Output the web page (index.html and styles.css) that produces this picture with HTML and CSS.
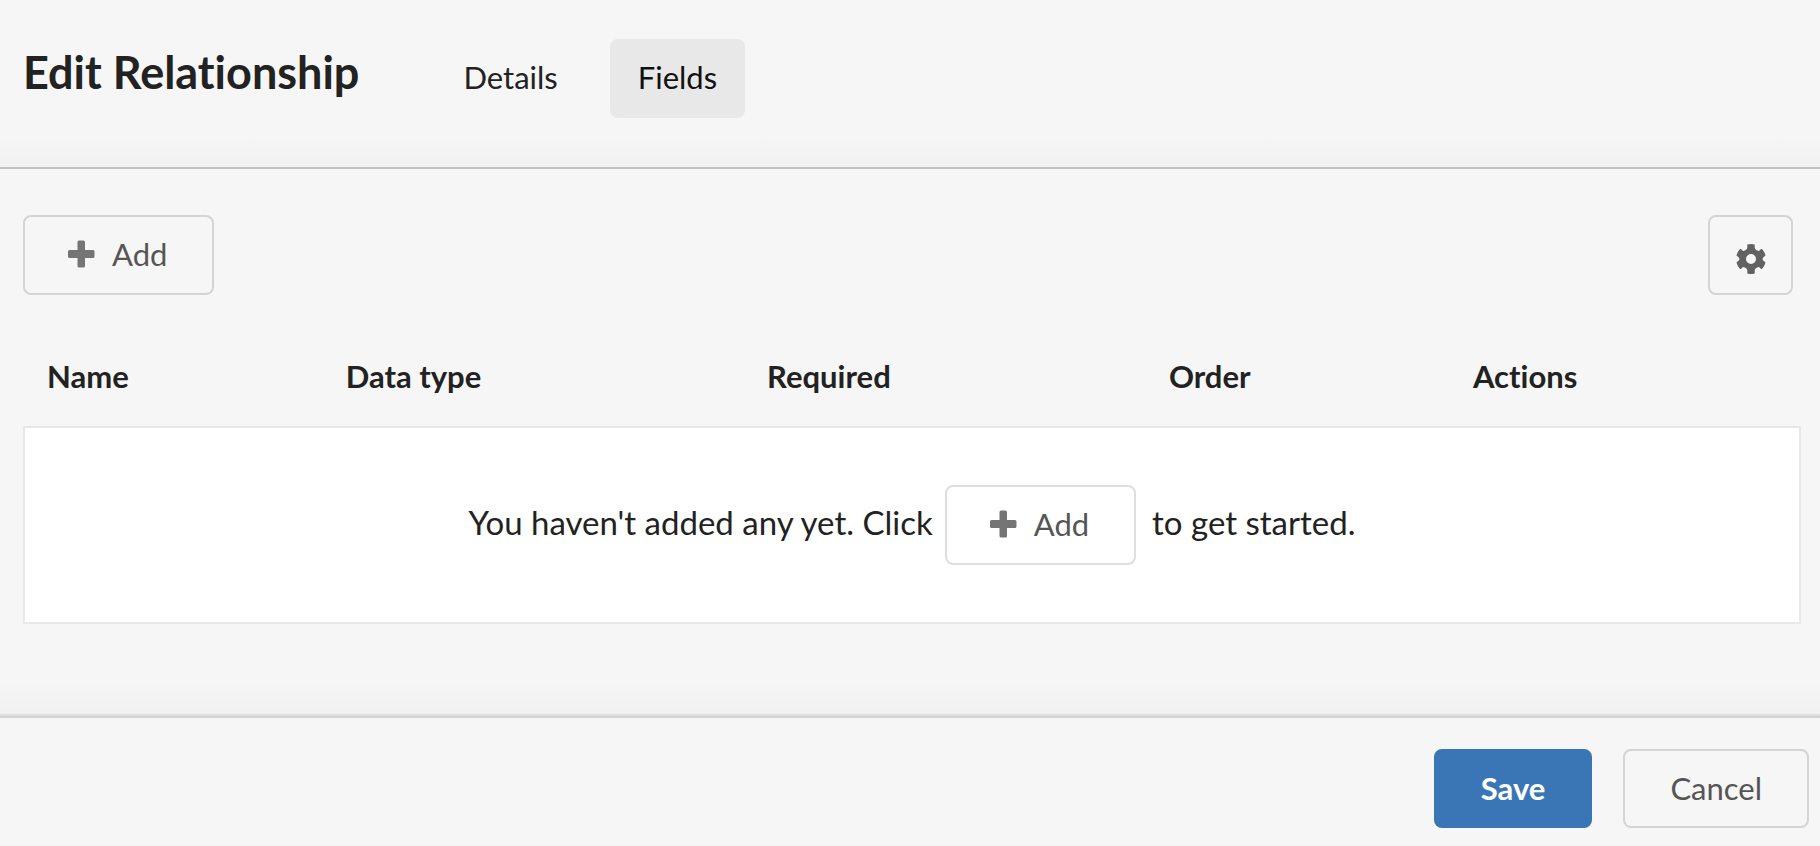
FILE: index.html
```html
<!DOCTYPE html>
<html lang="en">
<head>
<meta charset="utf-8">
<title>Edit Relationship</title>
<link rel="stylesheet" href="styles.css">
</head>
<body>
<div class="dialog">
  <header class="dialog-header">
    <h1 class="title">Edit Relationship</h1>
    <nav class="tabs">
      <a class="tab" href="#details">Details</a>
      <a class="tab active" href="#fields" aria-current="page">Fields</a>
    </nav>
  </header>
  <main class="content">
    <div class="toolbar">
      <button class="button" type="button">
        <svg class="icon-plus" viewBox="0 0 28 28" aria-hidden="true"><path d="M12 .5h4.500q1.500 0 1.500 1.500v8h8q1.500 0 1.500 1.500v5q0 1.500-1.500 1.500h-8v8q0 1.500-1.500 1.500h-4.500q-1.500 0-1.500-1.500v-8h-8q-1.500 0-1.500-1.500v-5q0-1.500 1.500-1.500h8v-8q0-1.500 1.500-1.500z"/></svg>
        Add
      </button>
      <button class="button square" type="button" aria-label="Settings">
        <svg class="icon-gear" viewBox="0 0 30 30" aria-hidden="true"><path fill-rule="evenodd" d="M11.300 .600Q15-.4 18.700.6V3.800Q18.900 5.300 20.300 6L21.800 6.800Q23 7.200 23.800 6.200L25 4.900H26Q28.400 7.500 29.400 11V11.800L28 12.800Q26.600 13.500 26.600 15Q26.600 16.500 28 17.200L29.400 18.200V19Q28.400 22.500 26 25.100H25L23.800 23.800Q23 22.800 21.800 23.200L20.300 24Q18.900 24.700 18.700 26.200V29.400Q15 30.400 11.300 29.400V26.200Q11.100 24.700 9.700 24L8.200 23.200Q7 22.800 6.200 23.800L5 25.100H4Q1.600 22.500.6 19V18.200L2 17.200Q3.400 16.500 3.400 15Q3.400 13.500 2 12.800L.6 11.800V11Q1.600 7.500 4 4.900H5L6.200 6.200Q7 7.200 8.200 6.800L9.700 6Q11.100 5.300 11.300 3.800ZM15 10a5 5 0 1 0 0 10a5 5 0 1 0 0-10z"/></svg>
      </button>
    </div>
    <table class="fields">
      <colgroup><col class="col-name"><col class="col-type"><col class="col-required"><col class="col-order"><col class="col-actions"></colgroup>
      <thead>
        <tr><th scope="col">Name</th><th scope="col">Data type</th><th scope="col">Required</th><th scope="col">Order</th><th scope="col">Actions</th></tr>
      </thead>
      <tbody>
        <tr>
          <td colspan="5">
            <div class="empty">
              <span>You haven't added any yet. Click</span>
              <button class="button" type="button">
                <svg class="icon-plus" viewBox="0 0 28 28" aria-hidden="true"><path d="M12 .5h4.500q1.500 0 1.500 1.500v8h8q1.500 0 1.500 1.500v5q0 1.500-1.500 1.500h-8v8q0 1.500-1.500 1.500h-4.500q-1.500 0-1.500-1.500v-8h-8q-1.500 0-1.500-1.500v-5q0-1.500 1.500-1.500h8v-8q0-1.500 1.500-1.500z"/></svg>
                Add
              </button>
              <span>to get started.</span>
            </div>
          </td>
        </tr>
      </tbody>
    </table>
  </main>
  <footer class="dialog-footer">
    <button class="button primary" type="submit">Save</button>
    <button class="button" type="button">Cancel</button>
  </footer>
</div>
</body>
</html>
```

FILE: styles.css
```css
* {
  box-sizing: border-box;
}

body {
  margin: 0;
  background: #f6f6f6;
  color: #222;
  font: 31px/36px Lato, "Open Sans", sans-serif;
  font-variant-ligatures: none;
}

.dialog {
  display: flex;
  flex-direction: column;
  min-height: 100vh;
}

.dialog-header {
  display: flex;
  align-items: flex-start;
  gap: 76px;
  padding: 39px 23px 49px;
  border-bottom: 2px solid #c2c2c2;
  background: linear-gradient(to top, #f1f1f1, #f6f6f6 32px);
}

.title {
  margin: 5px 0 0;
  font-size: 45px;
  line-height: 56px;
  font-weight: 700;
}

.tabs {
  display: flex;
  gap: 24px;
}

.tab {
  padding: 20px 28px 23px;
  border-radius: 8px;
  color: #222;
  text-decoration: none;
}

.tab.active {
  background: #e8e8e8;
  color: #111;
}

.content {
  flex: 1;
  padding: 46px 19px 90px 23px;
  background: linear-gradient(to top, #f1f1f1, #f6f6f6 32px);
}

.toolbar {
  display: flex;
  justify-content: space-between;
  padding-right: 8px;
}

.button {
  display: inline-flex;
  align-items: center;
  justify-content: center;
  gap: 17px;
  height: 80px;
  padding: 0 45px 2px 42px;
  border: 2px solid #d4d4d4;
  border-radius: 8px;
  background: transparent;
  color: #555;
  font: inherit;
  font-variant-ligatures: none;
}

.square {
  width: 85px;
  padding: 8px 0 0;
}

.icon-plus {
  width: 28px;
  height: 28px;
  fill: #757575;
}

.icon-gear {
  width: 30px;
  height: 30px;
  fill: #626262;
}

.fields {
  width: 100%;
  margin-top: 30px;
  border-collapse: separate;
  border-spacing: 0;
  table-layout: fixed;
}

.col-name { width: 16.8%; }
.col-type { width: 23.7%; }
.col-required { width: 22.6%; }
.col-order { width: 17.1%; }
.col-actions { width: 19.8%; }

.fields th {
  padding: 33px 24px 32px;
  font-weight: 700;
  text-align: left;
}

.fields td {
  padding: 57px 24px;
  border: 2px solid #e8e8e8;
  background: #fff;
}

.empty {
  display: flex;
  align-items: center;
  justify-content: center;
  gap: 12px;
  font-size: 33px;
  line-height: 40px;
}

.empty span {
  padding-bottom: 6px;
}

.empty .button {
  margin-right: 4px;
  border-color: #dedede;
  font-size: 31px;
}

.dialog-footer {
  display: flex;
  justify-content: flex-end;
  gap: 31px;
  padding: 33px 11px 18px;
  border-top: 2px solid #dedede;
  box-shadow: inset 0 2px #d2d2d2;
}

.dialog-footer .button {
  height: 79px;
  padding: 0 45px 2px;
}

.dialog-footer .primary {
  border-color: #3a75b5;
  background: #3a75b5;
  color: #fff;
  font-weight: 700;
}
```
